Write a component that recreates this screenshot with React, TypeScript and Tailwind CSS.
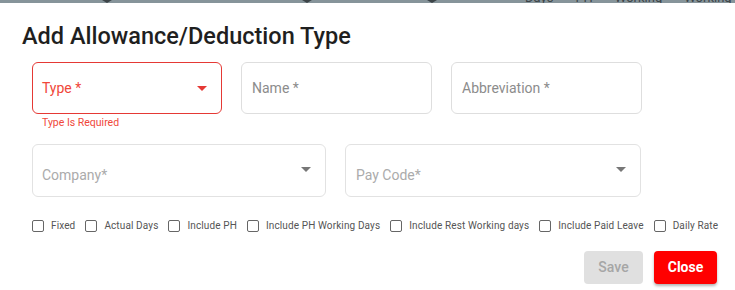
const checks = [
  'Fixed',
  'Actual Days',
  'Include PH',
  'Include PH Working Days',
  'Include Rest Working days',
  'Include Paid Leave',
  'Daily Rate',
]

function Arrow({ color }: { color: string }) {
  return (
    <svg width="10" height="5" viewBox="0 0 10 5" className="shrink-0">
      <path d="M0 0h10L5 5z" fill={color} />
    </svg>
  )
}

export default function App() {
  return (
    <div className="w-[735px] h-[290px] overflow-hidden bg-white font-['Roboto',sans-serif]">
      {/* backdrop peeking above the dialog */}
      <div className="h-[3px] bg-[#86949a] overflow-hidden flex items-end text-[13px] leading-[14px] text-[#3c4448]">
        <div className="ml-[102px] w-0 h-0 border-x-[5px] border-x-transparent border-t-[3px] border-t-[#3c4448]" />
        <div className="ml-[190px] w-0 h-0 border-x-[5px] border-x-transparent border-t-[3px] border-t-[#3c4448]" />
        <div className="ml-[115px] w-0 h-0 border-x-[5px] border-x-transparent border-t-[3px] border-t-[#3c4448]" />
        <div className="ml-[88px] flex gap-[22px] mb-[-2px]">
          <span>Days</span>
          <span>PH</span>
          <span>Working</span>
          <span>Working</span>
        </div>
      </div>

      <h2 className="pl-[22px] pt-[18px] text-[23.5px] leading-[30px] font-medium text-[#1f1f1f]">
        Add Allowance/Deduction Type
      </h2>

      <div className="pl-[32px] pt-[11px]">
        <div className="flex gap-[19px]">
          <div className="w-[190px] h-[52px] rounded-[6px] border border-[#e53935] flex items-center justify-between pl-[9px] pr-[14px]">
            <span className="text-[14px] text-[#f0473a]">Type *</span>
            <Arrow color="#e53935" />
          </div>
          <div className="w-[191px] h-[52px] rounded-[6px] border border-[#dedede] flex items-center pl-[10px]">
            <span className="text-[14px] text-[#8c8c8c]">Name *</span>
          </div>
          <div className="w-[191px] h-[52px] rounded-[6px] border border-[#dedede] flex items-center pl-[10px]">
            <span className="text-[14px] text-[#8c8c8c]">Abbreviation *</span>
          </div>
        </div>
        <div className="pl-[10px] pt-[2px] text-[10.5px] leading-[13px] text-[#f0473a]">Type Is Required</div>

        <div className="flex gap-[19px] mt-[15px]">
          <div className="w-[294px] h-[53px] rounded-[6px] border border-[#e2e2e2] flex justify-between pl-[9px] pr-[14px]">
            <span className="text-[14px] text-[#ababab] mt-[20px]">Company*</span>
            <span className="mt-[22px]"><Arrow color="#777777" /></span>
          </div>
          <div className="w-[296px] h-[53px] rounded-[6px] border border-[#e2e2e2] flex justify-between pl-[10px] pr-[14px]">
            <span className="text-[14px] text-[#ababab] mt-[20px]">Pay Code*</span>
            <span className="mt-[22px]"><Arrow color="#777777" /></span>
          </div>
        </div>

        <div className="flex items-center gap-[10px] mt-[23px] text-[10px] leading-[12px] tracking-[0.12px] text-[#555555]">
          {checks.map((c) => (
            <label key={c} className="flex items-center gap-[7px]">
              <span className="w-[12px] h-[12px] rounded-[2px] border border-[#666666] bg-white" />
              <span>{c}</span>
            </label>
          ))}
        </div>
      </div>

      <div className="flex justify-end gap-[11px] pr-[18px] mt-[19px]">
        <button className="w-[59px] h-[33px] rounded-[4px] bg-[#e0e0e0] text-[14px] font-medium text-[#a6a6a6]">
          Save
        </button>
        <button className="w-[63px] h-[33px] rounded-[4px] bg-[#ff0000] text-[14px] font-bold text-white shadow-[0_2px_3px_rgba(0,0,0,0.3)]">
          Close
        </button>
      </div>
    </div>
  )
}
